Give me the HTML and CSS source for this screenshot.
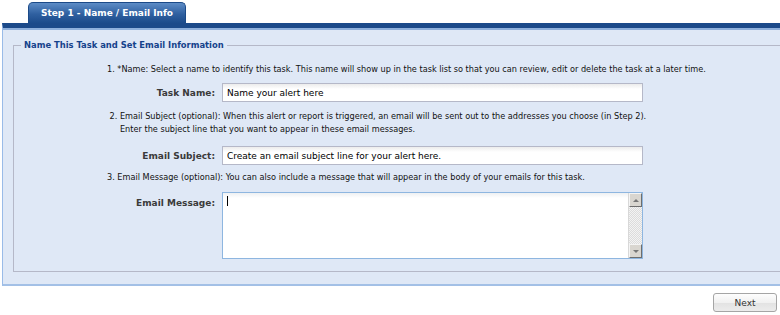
FILE: index.html
```html
<!DOCTYPE html>
<html lang="en">
<head>
  <meta charset="UTF-8" />
  <title>Step 1 - Name / Email Info</title>
  <link rel="stylesheet" href="styles.css">
</head>
<body>
  <div class="tabstrip">
    <div class="tab">Step 1 - Name / Email Info</div>
  </div>

  <div class="panel">
    <fieldset class="task-set">
      <legend>Name This Task and Set Email Information</legend>

      <div class="desc desc-1">1. *Name: Select a name to identify this task. This name will show up in the task list so that you can review, edit or delete the task at a later time.</div>
      <div class="row">
        <label for="taskName">Task Name:</label>
        <input type="text" id="taskName" value="Name your alert here" />
      </div>

      <div class="desc desc-2">&nbsp;2. Email Subject (optional): When this alert or report is triggered, an email will be sent out to the addresses you choose (in Step 2).<br>&nbsp;&nbsp;&nbsp;&nbsp;&nbsp;Enter the subject line that you want to appear in these email messages.</div>
      <div class="row">
        <label for="emailSubject">Email Subject:</label>
        <input type="text" id="emailSubject" value="Create an email subject line for your alert here." />
      </div>

      <div class="desc desc-3">3. Email Message (optional): You can also include a message that will appear in the body of your emails for this task.</div>
      <div class="row row-top">
        <label for="emailMessage">Email Message:</label>
        <div class="memo">
          <textarea id="emailMessage"></textarea>
          <span class="caret"></span>
          <div class="scrollbar">
            <div class="sb-btn sb-up"></div>
            <div class="sb-track"></div>
            <div class="sb-btn sb-down"></div>
          </div>
        </div>
      </div>
    </fieldset>
  </div>

  <div class="footer">
    <button type="button" class="btn-next">Next</button>
  </div>
</body>
</html>
```

FILE: styles.css
```css
body {
  margin: 0;
  padding: 0;
  width: 780px;
  height: 315px;
  overflow: hidden;
  background: #fff;
  font-family: "DejaVu Sans", Tahoma, Verdana, sans-serif;
  color: #111;
}

.tabstrip {
  height: 23px;
  padding-left: 28px;
  display: flex;
  align-items: flex-end;
}

.tab {
  width: 156px;
  height: 20px;
  line-height: 20px;
  text-align: center;
  color: #fff;
  font-size: 9px;
  font-weight: bold;
  border: 1px solid #1b4a88;
  border-bottom: none;
  border-radius: 5px 5px 0 0;
  background: linear-gradient(#5d8cc6, #2f60a0 55%, #1c4b8b);
}

.panel {
  width: 830px;
  margin-left: 2px;
  background: #dfe8f6;
  border-top: 5px solid #1c4a8a;
  border-left: 1px solid #99bbe8;
  border-bottom: 2px solid #a3c0e6;
  box-shadow: inset 0 2px 0 #8fb0dc;
  padding: 11px 0 12px 10px;
}

.task-set {
  margin: 0;
  padding: 12px 0 12px 7px;
  border: 1px solid #b5b8c8;
}

.task-set legend {
  padding: 0 3px;
  font-size: 8.4px;
  line-height: 12px;
  font-weight: bold;
  color: #15428b;
}

.desc {
  font-size: 8.16px;
  line-height: 13px;
  margin-left: 86px;
  white-space: nowrap;
}

.desc-1 {
  margin-bottom: 7px;
}

.desc-2 {
  margin-top: 8px;
  margin-bottom: 10px;
}

.desc-3 {
  margin-top: 6px;
  margin-bottom: 8px;
}

.row {
  display: flex;
  align-items: center;
}

.row label {
  width: 194px;
  margin-right: 7px;
  text-align: right;
  font-size: 9px;
  font-weight: bold;
  color: #3a3a3a;
  flex-shrink: 0;
}

.row-top {
  align-items: flex-start;
}

.row-top label {
  padding-top: 6px;
}

.row input {
  box-sizing: border-box;
  width: 421px;
  height: 19px;
  margin: 0;
  padding: 0 4px;
  border: 1px solid #b5b8c8;
  background: linear-gradient(#ececec, #fff 5px);
  font-family: "DejaVu Sans", Tahoma, Verdana, sans-serif;
  font-size: 9px;
  color: #000;
  outline: none;
}

.memo {
  position: relative;
  box-sizing: border-box;
  width: 421px;
  height: 67px;
  display: flex;
  border: 1px solid #8eb6e0;
  background: linear-gradient(#eef0f2, #fff 5px);
}

.memo textarea {
  flex: 1;
  margin: 0;
  padding: 2px 4px;
  border: none;
  background: transparent;
  resize: none;
  outline: none;
  font-family: "DejaVu Sans", Tahoma, Verdana, sans-serif;
  font-size: 9px;
}

.caret {
  position: absolute;
  left: 4px;
  top: 3px;
  width: 1px;
  height: 10px;
  background: #000;
}

.scrollbar {
  width: 13px;
  display: flex;
  flex-direction: column;
  border-left: 1px solid #d8d8d8;
}

.sb-btn {
  height: 14px;
  box-sizing: border-box;
  border: 1px solid;
  border-color: #f4f4f4 #6e6e6e #6e6e6e #f4f4f4;
  background: #d9d6d0;
  display: flex;
  align-items: center;
  justify-content: center;
}

.sb-btn::after {
  content: "";
  border-left: 3px solid transparent;
  border-right: 3px solid transparent;
}

.sb-up::after {
  border-bottom: 3px solid #777;
}

.sb-down::after {
  border-top: 3px solid #777;
}

.sb-track {
  flex: 1;
  background: repeating-conic-gradient(#dcdcdc 0 25%, #f3f3f3 0 50%) 0 0 / 2px 2px;
}

.footer {
  display: flex;
  justify-content: flex-end;
  padding: 7px 3px 0 0;
}

.btn-next {
  width: 64px;
  height: 19px;
  padding: 0;
  border: 1px solid #a5a5a5;
  border-radius: 3px;
  background: linear-gradient(#fdfdfd, #f1f1f1 50%, #e2e2e2 51%, #ececec);
  font-family: "DejaVu Sans", Tahoma, Verdana, sans-serif;
  font-size: 9px;
  color: #333;
  cursor: pointer;
}
```
